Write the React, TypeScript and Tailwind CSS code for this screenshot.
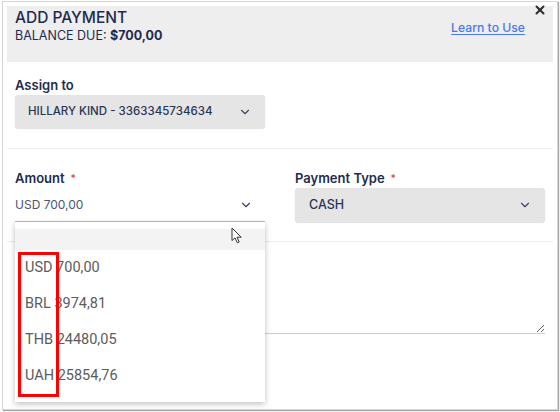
import { X, ChevronDown } from 'lucide-react';

const options = ['USD 700,00', 'BRL 3974,81', 'THB 24480,05', 'UAH 25854,76'];

function Label({ text, required }: { text: string; required?: boolean }) {
  return (
    <div className="h-[18px] text-[13px] leading-[18px] font-semibold text-[#1f2b4d]">
      {text}
      {required && <span className="ml-[6px] text-[10px] align-top text-[#e5484d]">*</span>}
    </div>
  );
}

function Pointer() {
  return (
    <svg width="12" height="17" viewBox="0 0 12 17" className="absolute left-[216px] top-[5px]">
      <path d="M1 1 L1 13.5 L4 10.8 L6.3 15.8 L8.2 15 L6 10.2 L10.2 10.2 Z" fill="#fff" stroke="#333" strokeWidth="1" strokeLinejoin="round" />
    </svg>
  );
}

export default function App() {
  return (
    <div className="w-[560px] h-[412px] bg-white font-['Inter',sans-serif] overflow-hidden">
      <div className="relative ml-[2px] mt-[1px] w-[556px] h-[409px] border border-[#d6d6d6] shadow-[1px_1px_1px_rgba(0,0,0,0.35)] px-[4px] pt-[4px]">
        <X className="absolute right-[10px] top-[1px] w-[14px] h-[14px] text-[#2f2f2f]" strokeWidth={3.5} />

        {/* Header */}
        <div className="h-[56px] bg-[#eeeeee] flex justify-between px-[8px]">
          <div className="pt-[2px]">
            <div className="text-[15.5px] leading-[20px] font-medium text-[#1f2b4d]">ADD PAYMENT</div>
            <div className="text-[12.5px] leading-[15px] text-[#1f2b4d]">
              BALANCE DUE: <span className="font-bold">$700,00</span>
            </div>
          </div>
          <a className="mt-[13px] mr-[20px] h-[18px] text-[12.2px] leading-[18px] font-medium text-[#4a78f0] underline underline-offset-2">
            Learn to Use
          </a>
        </div>

        <div className="px-[8px]">
          {/* Assign to */}
          <div className="pt-[14px] pb-[20px] border-b border-[#ededed] -mx-[8px] px-[8px]">
            <Label text="Assign to" />
            <div className="mt-[1px] w-[250px] h-[33px] bg-[#e5e5e5] rounded-[3px] shadow-[0_1px_1px_rgba(0,0,0,0.12)] flex items-center justify-between pl-[13px] pr-[13px]">
              <span className="text-[11.5px] font-medium text-[#2a3552]">HILLARY KIND - 3363345734634</span>
              <ChevronDown className="w-[14px] h-[14px] text-[#3a4560]" strokeWidth={2} />
            </div>
          </div>

          {/* Amount / payment type */}
          <div className="pt-[20px] pb-[19px] border-b border-[#ededed] -mx-[8px] px-[8px] grid grid-cols-2 gap-[30px]">
            <div className="relative z-10">
              <Label text="Amount" required />
              <div className="mt-[1px] h-[34px] border-b border-[#bdbdbd] flex items-center justify-between pr-[12px]">
                <span className="text-[12px] text-[#4a5573]">USD 700,00</span>
                <ChevronDown className="w-[14px] h-[14px] text-[#3a4560]" strokeWidth={2} />
              </div>

              {/* Open currency menu */}
              <div className="absolute left-0 top-[53px] w-[250px] h-[180px] bg-white shadow-[0_2px_6px_rgba(0,0,0,0.25)] pt-[7px] pb-[8px] font-['Roboto',sans-serif]">
                <div className="h-[21px] bg-[#f3f3f3]" />
                {options.map(o => (
                  <div key={o} className="h-[36px] flex items-center pl-[10px] text-[14.5px] text-[#5c5c5c]">
                    {o}
                  </div>
                ))}
                <Pointer />
                <div className="absolute left-[3px] top-[30px] w-[41px] h-[145px] border-[3px] border-[#ff0000]" />
              </div>
            </div>
            <div>
              <Label text="Payment Type" required />
              <div className="mt-[1px] h-[34px] bg-[#e5e5e5] rounded-[3px] shadow-[0_1px_1px_rgba(0,0,0,0.12)] flex items-center justify-between pl-[14px] pr-[13px]">
                <span className="text-[12.5px] font-medium text-[#2a3552]">CASH</span>
                <ChevronDown className="w-[14px] h-[14px] text-[#3a4560]" strokeWidth={2} />
              </div>
            </div>
          </div>

          {/* Notes */}
          <textarea className="block mt-[20px] w-[530px] h-[72px] border-b border-[#cfcfcf] outline-none resize-y" />
        </div>
      </div>
    </div>
  );
}
